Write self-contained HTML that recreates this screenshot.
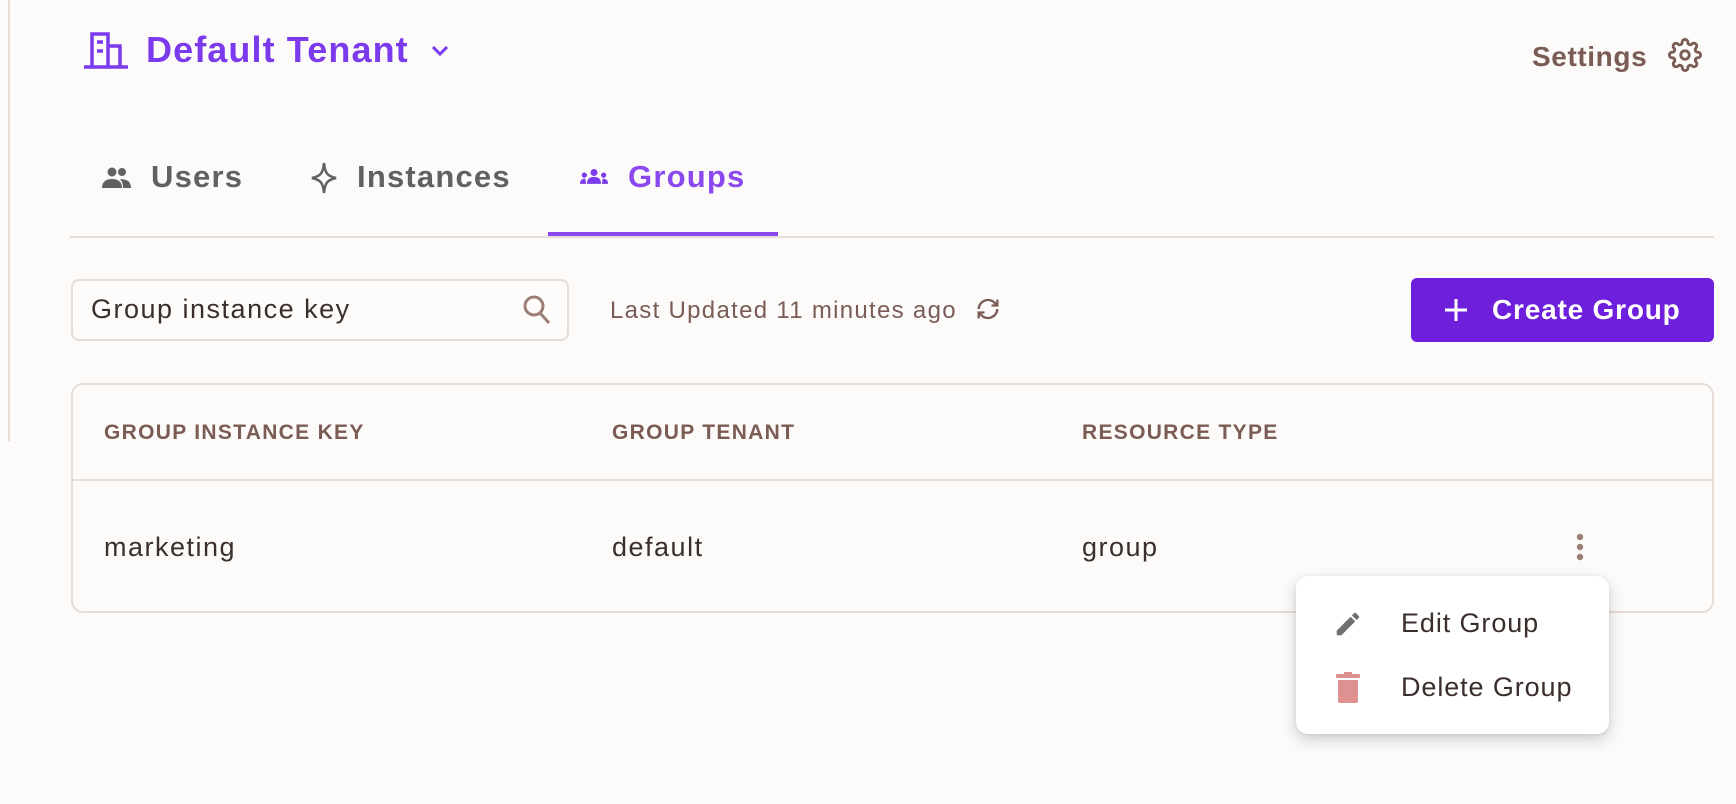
<!DOCTYPE html>
<html><head><style>
*{box-sizing:border-box;margin:0;padding:0}
body{width:1736px;height:804px;background:#fcfbfa;font-family:"Liberation Sans",sans-serif;position:relative;overflow:hidden;color:#3b2f2c}
.a{position:absolute}
.vl{left:8px;top:0;width:2px;height:441px;background:#ecdcd6}
.title{left:146px;top:29px;font-size:36px;font-weight:700;color:#7c3aed;letter-spacing:1.1px}
.tab{top:159px;font-size:31px;font-weight:700;color:#616161;letter-spacing:1.2px}
.th{top:421px;font-size:21px;font-weight:700;color:#7a5c55;letter-spacing:1.3px}
.td{top:532px;font-size:27px;color:#3b2f2c;letter-spacing:1.5px}
</style></head><body>
<div class="a vl"></div>
<svg class="a" style="left:84px;top:32px" width="44" height="37" viewBox="0 0 44 37" fill="none" stroke="#7c3aed" stroke-width="3.5"><path d="M0 35H44M8 35V2H24V35M24 14H36V35M13 10H19M13 19H19"/></svg>
<div class="a title">Default Tenant</div>
<svg class="a" style="left:430px;top:44px" width="20" height="14" viewBox="0 0 20 14" fill="none" stroke="#7c3aed" stroke-width="3"><path d="M3 3L10 10L17 3"/></svg>
<div class="a" style="left:1532px;top:41px;font-size:28px;font-weight:700;color:#7a5c55;letter-spacing:.6px">Settings</div>
<svg class="a" style="left:1668px;top:38px" width="34" height="34" viewBox="0 0 24 24" fill="none" stroke="#7a5c55" stroke-width="2"><circle cx="12" cy="12" r="3"/><path d="M19.4 15a1.65 1.65 0 0 0 .33 1.82l.06.06a2 2 0 1 1-2.830 2.83l-.06-.06a1.65 1.65 0 0 0-1.82-.33 1.65 1.65 0 0 0-1 1.51V21a2 2 0 1 1-4 0v-.09A1.65 1.65 0 0 0 9 19.4a1.65 1.65 0 0 0-1.82.33l-.06.06a2 2 0 1 1-2.83-2.830l.06-.06A1.65 1.65 0 0 0 4.6 15a1.65 1.65 0 0 0-1.51-1H3a2 2 0 1 1 0-4h.09A1.65 1.65 0 0 0 4.6 9a1.65 1.65 0 0 0-.33-1.82l-.06-.06a2 2 0 1 1 2.83-2.83l.06.06A1.65 1.65 0 0 0 9 4.6a1.65 1.65 0 0 0 1-1.51V3a2 2 0 1 1 4 0v.09a1.65 1.65 0 0 0 1 1.51 1.65 1.65 0 0 0 1.82-.33l.06-.06a2 2 0 1 1 2.83 2.83l-.06.06A1.65 1.65 0 0 0 19.4 9a1.65 1.65 0 0 0 1.51 1H21a2 2 0 1 1 0 4h-.09a1.65 1.65 0 0 0-1.51 1z"/></svg>

<svg class="a" style="left:102px;top:166px" width="30" height="22" viewBox="0 0 30 22" fill="#616161"><circle cx="10" cy="6" r="4.5"/><circle cx="20" cy="6" r="4"/><path d="M0 22C0 15 5 13 10 13S20 15 20 22Z"/><path d="M18 13C24 13 29 15 29 22H21C21 18 20 15 18 13Z"/></svg>
<div class="a tab" style="left:151px">Users</div>
<svg class="a" style="left:309px;top:161px" width="30" height="34" viewBox="0 0 30 34" fill="none" stroke="#616161" stroke-width="2.5"><path d="M15 2C16 12 18 15 27 17C18 19 16 22 15 32C14 22 12 19 3 17C12 15 14 12 15 2Z"/></svg>
<div class="a tab" style="left:357px">Instances</div>
<svg class="a" style="left:580px;top:168px" width="28" height="16" viewBox="0 0 32 18" fill="#7c3aed"><circle cx="16" cy="5" r="4"/><circle cx="5" cy="8" r="3"/><circle cx="27" cy="8" r="3"/><path d="M8 18C8 12 11 10 16 10S24 12 24 18Z"/><path d="M0 18C0 14 2 12 6 12L7 18Z"/><path d="M32 18C32 14 30 12 26 12L25 18Z"/></svg>
<div class="a tab" style="left:628px;color:#8b48ef">Groups</div>
<div class="a" style="left:70px;top:236px;width:1644px;height:2px;background:#e6dcd8"></div>
<div class="a" style="left:548px;top:232px;width:230px;height:4px;background:#8b48ef"></div>

<div class="a" style="left:71px;top:279px;width:498px;height:62px;border:2px solid #e8dcd7;border-radius:8px;background:#fdfcfb"></div>
<div class="a" style="left:91px;top:294px;font-size:27px;color:#3b2f2c;letter-spacing:1.5px">Group instance key</div>
<svg class="a" style="left:522px;top:294px" width="30" height="32" viewBox="0 0 30 32" fill="none" stroke="#9b7e75" stroke-width="3"><circle cx="12" cy="12" r="9"/><path d="M18 19L27 29"/></svg>
<div class="a" style="left:610px;top:297px;font-size:24px;color:#7a5c55;letter-spacing:1.3px">Last Updated 11 minutes ago</div>
<svg class="a" style="left:973px;top:295px" width="30" height="28" viewBox="0 0 24 24" fill="none" stroke="#7a5c55" stroke-width="2"><path d="M4 12a8 8 0 0 1 14-5l2 2M20 12a8 8 0 0 1-14 5l-2-2"/><path d="M20 4v5h-5M4 20v-5h5"/></svg>
<div class="a" style="left:1411px;top:278px;width:303px;height:64px;background:#6d1fdc;border-radius:6px"></div>
<svg class="a" style="left:1444px;top:298px" width="24" height="24" viewBox="0 0 24 24" stroke="#fff" stroke-width="3"><path d="M12 1V23M1 12H23"/></svg>
<div class="a" style="left:1492px;top:294px;font-size:28px;font-weight:700;color:#fff;letter-spacing:.8px">Create Group</div>

<div class="a" style="left:71px;top:383px;width:1643px;height:230px;border:2px solid #e8dcd7;border-radius:12px"></div>
<div class="a" style="left:72px;top:479px;width:1641px;height:2px;background:#e8dcd7"></div>
<div class="a th" style="left:104px">GROUP INSTANCE KEY</div>
<div class="a th" style="left:612px">GROUP TENANT</div>
<div class="a th" style="left:1082px">RESOURCE TYPE</div>
<div class="a td" style="left:104px">marketing</div>
<div class="a td" style="left:612px">default</div>
<div class="a td" style="left:1082px">group</div>
<svg class="a" style="left:1574px;top:533px" width="12" height="30" fill="#9b7e75"><circle cx="6" cy="4" r="3.2"/><circle cx="6" cy="14" r="3.2"/><circle cx="6" cy="24" r="3.2"/></svg>

<div class="a" style="left:1296px;top:576px;width:313px;height:158px;background:#fff;border-radius:12px;box-shadow:0 6px 16px rgba(0,0,0,.18),0 1px 4px rgba(0,0,0,.08)"></div>
<svg class="a" style="left:1333px;top:609px" width="30" height="30" viewBox="0 0 24 24" fill="#707070"><path d="M3 17.25V21h3.75L17.81 9.94l-3.75-3.75L3 17.25zM20.71 7.04a1 1 0 0 0 0-1.41l-2.34-2.340a1 1 0 0 0-1.41 0l-1.83 1.83 3.75 3.75 1.83-1.83z"/></svg>
<div class="a" style="left:1401px;top:608px;font-size:27px;color:#3b2f2c;letter-spacing:.9px">Edit Group</div>
<svg class="a" style="left:1336px;top:672px" width="24" height="32" viewBox="0 0 24 32" fill="#df9090"><rect x="0" y="2" width="24" height="4" rx="1"/><rect x="8" y="0" width="8" height="3"/><path d="M2 8H22V29a2 2 0 0 1-2 2H4a2 2 0 0 1-2-2Z"/></svg>
<div class="a" style="left:1401px;top:672px;font-size:27px;color:#3b2f2c;letter-spacing:.9px">Delete Group</div>
</body></html>
